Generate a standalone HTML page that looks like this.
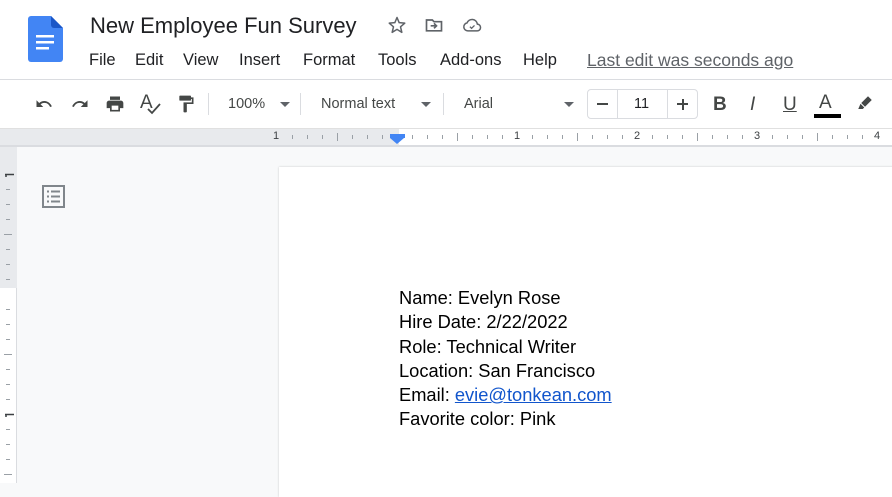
<!DOCTYPE html>
<html><head><meta charset="utf-8"><style>
*{margin:0;padding:0;box-sizing:border-box}
body{width:892px;height:483px;overflow:hidden;background:#f8f9fa;font-family:"Liberation Sans",Arial,sans-serif;position:relative;color:#202124}
.a{position:absolute;white-space:nowrap}
.m{font-size:16.5px;top:51px;color:#202124}
.tb{color:#444746;font-size:14.5px}
svg{position:absolute}
</style></head><body>
<div class="a" style="left:0;top:0;width:892px;height:128px;background:#fff"></div>
<div class="a" style="left:0;top:79px;width:892px;height:1px;background:#dadce0"></div>
<svg style="left:28px;top:16px" width="35" height="46" viewBox="0 0 35 46">
<path d="M3 0H23L35 12V43a3 3 0 0 1-3 3H3a3 3 0 0 1-3-3V3a3 3 0 0 1 3-3z" fill="#4285f4"/>
<path d="M23 0L35 12H26a3 3 0 0 1-3-3z" fill="#1a56c7"/>
<rect x="8" y="19" width="18" height="2.5" fill="#fff"/><rect x="8" y="25" width="18" height="2.5" fill="#fff"/><rect x="8" y="31" width="13" height="2.5" fill="#fff"/>
</svg>
<div class="a" style="left:90px;top:13px;font-size:22px;color:#202124">New Employee Fun Survey</div>
<svg style="left:387px;top:15px" width="20" height="20" viewBox="0 0 24 24"><path d="M12 3l2.6 6.2 6.7.6-5.1 4.4 1.6 6.6L12 17.3l-5.8 3.5 1.6-6.6L2.7 9.8l6.7-.6z" fill="none" stroke="#5f6368" stroke-width="1.8" stroke-linejoin="round"/></svg>
<svg style="left:424px;top:15px" width="20" height="20" viewBox="0 0 24 24"><path d="M3 6v13h18V8h-9l-2-2z" fill="none" stroke="#5f6368" stroke-width="2"/><path d="M8 13h7M12 10l3 3-3 3" fill="none" stroke="#5f6368" stroke-width="2"/></svg>
<svg style="left:461px;top:15px" width="22" height="20" viewBox="0 0 24 24"><path d="M7 19h11a4 4 0 0 0 .5-8A6.5 6.5 0 0 0 6 9.5 4.8 4.8 0 0 0 7 19z" fill="none" stroke="#5f6368" stroke-width="1.8"/><path d="M9.5 14l2 2 3.5-3.5" fill="none" stroke="#5f6368" stroke-width="1.6"/></svg>
<div class="a m" style="left:89px">File</div>
<div class="a m" style="left:135px">Edit</div>
<div class="a m" style="left:183px">View</div>
<div class="a m" style="left:239px">Insert</div>
<div class="a m" style="left:303px">Format</div>
<div class="a m" style="left:378px">Tools</div>
<div class="a m" style="left:440px">Add-ons</div>
<div class="a m" style="left:523px">Help</div>
<div class="a m" style="left:587px;font-size:17.5px;top:50px;color:#5f6368;text-decoration:underline">Last edit was seconds ago</div>
<!-- toolbar -->
<svg style="left:34px;top:95px" width="20" height="18" viewBox="0 0 24 24"><path d="M12.5 8c-2.6 0-5 1-6.9 2.6L2 7v9h9l-3.6-3.6c1.4-1.2 3.2-1.9 5.1-1.9 3.5 0 6.5 2.3 7.6 5.5l2.4-.8C21 11.5 17.1 8 12.5 8z" fill="#444746"/></svg>
<svg style="left:70px;top:95px" width="20" height="18" viewBox="0 0 24 24"><path d="M11.5 8c2.6 0 5 1 6.9 2.6L22 7v9h-9l3.6-3.6c-1.4-1.2-3.2-1.9-5.1-1.9-3.5 0-6.5 2.3-7.6 5.5L1.5 15.2C3 11.5 6.9 8 11.5 8z" fill="#444746"/></svg>
<svg style="left:104px;top:94px" width="22" height="20" viewBox="0 0 24 24"><path d="M19 8H5c-1.7 0-3 1.3-3 3v6h4v4h12v-4h4v-6c0-1.7-1.3-3-3-3zm-3 11H8v-5h8v5zm2-12V3H6v4z" fill="#444746"/></svg>
<div class="a" style="left:140px;top:92px;font-size:19px;color:#444746">A</div>
<svg style="left:146px;top:102px" width="16" height="14" viewBox="0 0 16 14"><path d="M2 7l4 4 8-9" fill="none" stroke="#444746" stroke-width="1.8"/></svg>
<svg style="left:176px;top:94px" width="20" height="20" viewBox="0 0 24 24"><path d="M18 4V3c0-.6-.4-1-1-1H5c-.6 0-1 .4-1 1v4c0 .6.4 1 1 1h12c.6 0 1-.4 1-1V6h1v4H9v11c0 .6.4 1 1 1h2c.6 0 1-.4 1-1v-9h8V4z" fill="#444746"/></svg>
<div class="a" style="left:208px;top:93px;width:1px;height:22px;background:#dadce0"></div>
<div class="a tb" style="left:228px;top:96px">100%</div>
<div class="a" style="left:280px;top:102px;border:5px solid transparent;border-top-color:#5f6368;border-bottom:0"></div>
<div class="a" style="left:300px;top:93px;width:1px;height:22px;background:#dadce0"></div>
<div class="a tb" style="left:321px;top:96px">Normal text</div>
<div class="a" style="left:421px;top:102px;border:5px solid transparent;border-top-color:#5f6368;border-bottom:0"></div>
<div class="a" style="left:443px;top:93px;width:1px;height:22px;background:#dadce0"></div>
<div class="a tb" style="left:464px;top:96px">Arial</div>
<div class="a" style="left:564px;top:102px;border:5px solid transparent;border-top-color:#5f6368;border-bottom:0"></div>
<div class="a" style="left:587px;top:89px;width:111px;height:30px;border:1px solid #dadce0;border-radius:4px"></div>
<div class="a" style="left:617px;top:89px;width:1px;height:30px;background:#dadce0"></div>
<div class="a" style="left:667px;top:89px;width:1px;height:30px;background:#dadce0"></div>
<div class="a" style="left:597px;top:103px;width:11px;height:2px;background:#444746"></div>
<div class="a tb" style="left:634px;top:96px;color:#202124">11</div>
<div class="a" style="left:677px;top:103px;width:11px;height:2px;background:#444746"></div>
<div class="a" style="left:681.5px;top:98.5px;width:2px;height:11px;background:#444746"></div>
<div class="a" style="left:713px;top:94px;font-size:19px;font-weight:bold;color:#444746">B</div>
<div class="a" style="left:750px;top:94px;font-size:19px;font-style:italic;color:#444746">I</div>
<div class="a" style="left:783px;top:94px;font-size:19px;text-decoration:underline;color:#444746">U</div>
<div class="a" style="left:819px;top:92px;font-size:19px;color:#444746">A</div>
<div class="a" style="left:814px;top:114px;width:27px;height:4px;background:#000"></div>
<svg style="left:855px;top:94px" width="20" height="18" viewBox="0 0 24 24"><path d="M16 3l5 5-9 9-5-5zM6 13l5 5-2 2H3z" fill="#444746"/></svg>
<!-- ruler -->
<div class="a" style="left:0;top:128px;width:892px;height:19px;background:#fff;border-top:1px solid #e0e0e0;border-bottom:2px solid #dadce0"></div>
<div class="a" style="left:0;top:129px;width:399px;height:16px;background:#e8eaed"></div>
<div class="a" style="left:273px;top:130px;font-size:11px;color:#3c4043">1</div>
<div class="a" style="left:514px;top:130px;font-size:11px;color:#3c4043">1</div>
<div class="a" style="left:634px;top:130px;font-size:11px;color:#3c4043">2</div>
<div class="a" style="left:754px;top:130px;font-size:11px;color:#3c4043">3</div>
<div class="a" style="left:874px;top:130px;font-size:11px;color:#3c4043">4</div>
<svg style="left:0;top:129px" width="892" height="16">
<g stroke="#9aa0a6" stroke-width="1">
<path d="M292.5 6v4M307.5 6v4M322.5 6v4M337.5 4v8M352.5 6v4M367.5 6v4M382.5 6v4M412.5 6v4M427.5 6v4M442.5 6v4M457.5 4v8M472.5 6v4M487.5 6v4M502.5 6v4M532.5 6v4M547.5 6v4M562.5 6v4M577.5 4v8M592.5 6v4M607.5 6v4M622.5 6v4M652.5 6v4M667.5 6v4M682.5 6v4M697.5 4v8M712.5 6v4M727.5 6v4M742.5 6v4M772.5 6v4M787.5 6v4M802.5 6v4M817.5 4v8M832.5 6v4M847.5 6v4M862.5 6v4"/>
</g></svg>
<div class="a" style="left:390px;top:134px;width:15px;height:4px;background:#4285f4"></div>
<div class="a" style="left:390px;top:138px;border:7.5px solid transparent;border-top:6px solid #4285f4;border-bottom:0"></div>
<!-- vertical ruler -->
<div class="a" style="left:0;top:147px;width:17px;height:336px;background:#fff;border-right:1px solid #dadce0"></div>
<div class="a" style="left:0;top:147px;width:17px;height:141px;background:#e8eaed"></div>
<svg style="left:0;top:147px" width="17" height="336"><g stroke="#9aa0a6"><path d="M6 42.5h4M6 57.5h4M6 72.5h4M4 87.5h8M6 102.5h4M6 117.5h4M6 132.5h4M6 162.5h4M6 177.5h4M6 192.5h4M4 207.5h8M6 222.5h4M6 237.5h4M6 252.5h4M6 282.5h4M6 297.5h4M6 312.5h4M4 327.5h8"/></g>
<path d="M5 27.5h9M6 27v3M5 267.5h9M6 267v3" stroke="#3c4043" stroke-width="1.5"/></svg>
<svg style="left:42px;top:185px" width="23" height="23" viewBox="0 0 23 23"><rect x="1" y="1" width="21" height="21" fill="none" stroke="#80868b" stroke-width="2"/><path d="M5 6.5h2M9 6.5h9M5 11.5h2M9 11.5h9M5 16.5h2M9 16.5h9" stroke="#80868b" stroke-width="2"/></svg>
<!-- page -->
<div class="a" style="left:279px;top:167px;width:620px;height:330px;background:#fff;box-shadow:0 0 2px rgba(0,0,0,.2)"></div>
<div class="a" style="left:399px;top:286px;font-size:18.3px;line-height:24.3px;color:#000">Name: Evelyn Rose<br>Hire Date: 2/22/2022<br>Role: Technical Writer<br>Location: San Francisco<br>Email: <span style="color:#1155cc;text-decoration:underline">evie@tonkean.com</span><br>Favorite color: Pink</div>
</body></html>
